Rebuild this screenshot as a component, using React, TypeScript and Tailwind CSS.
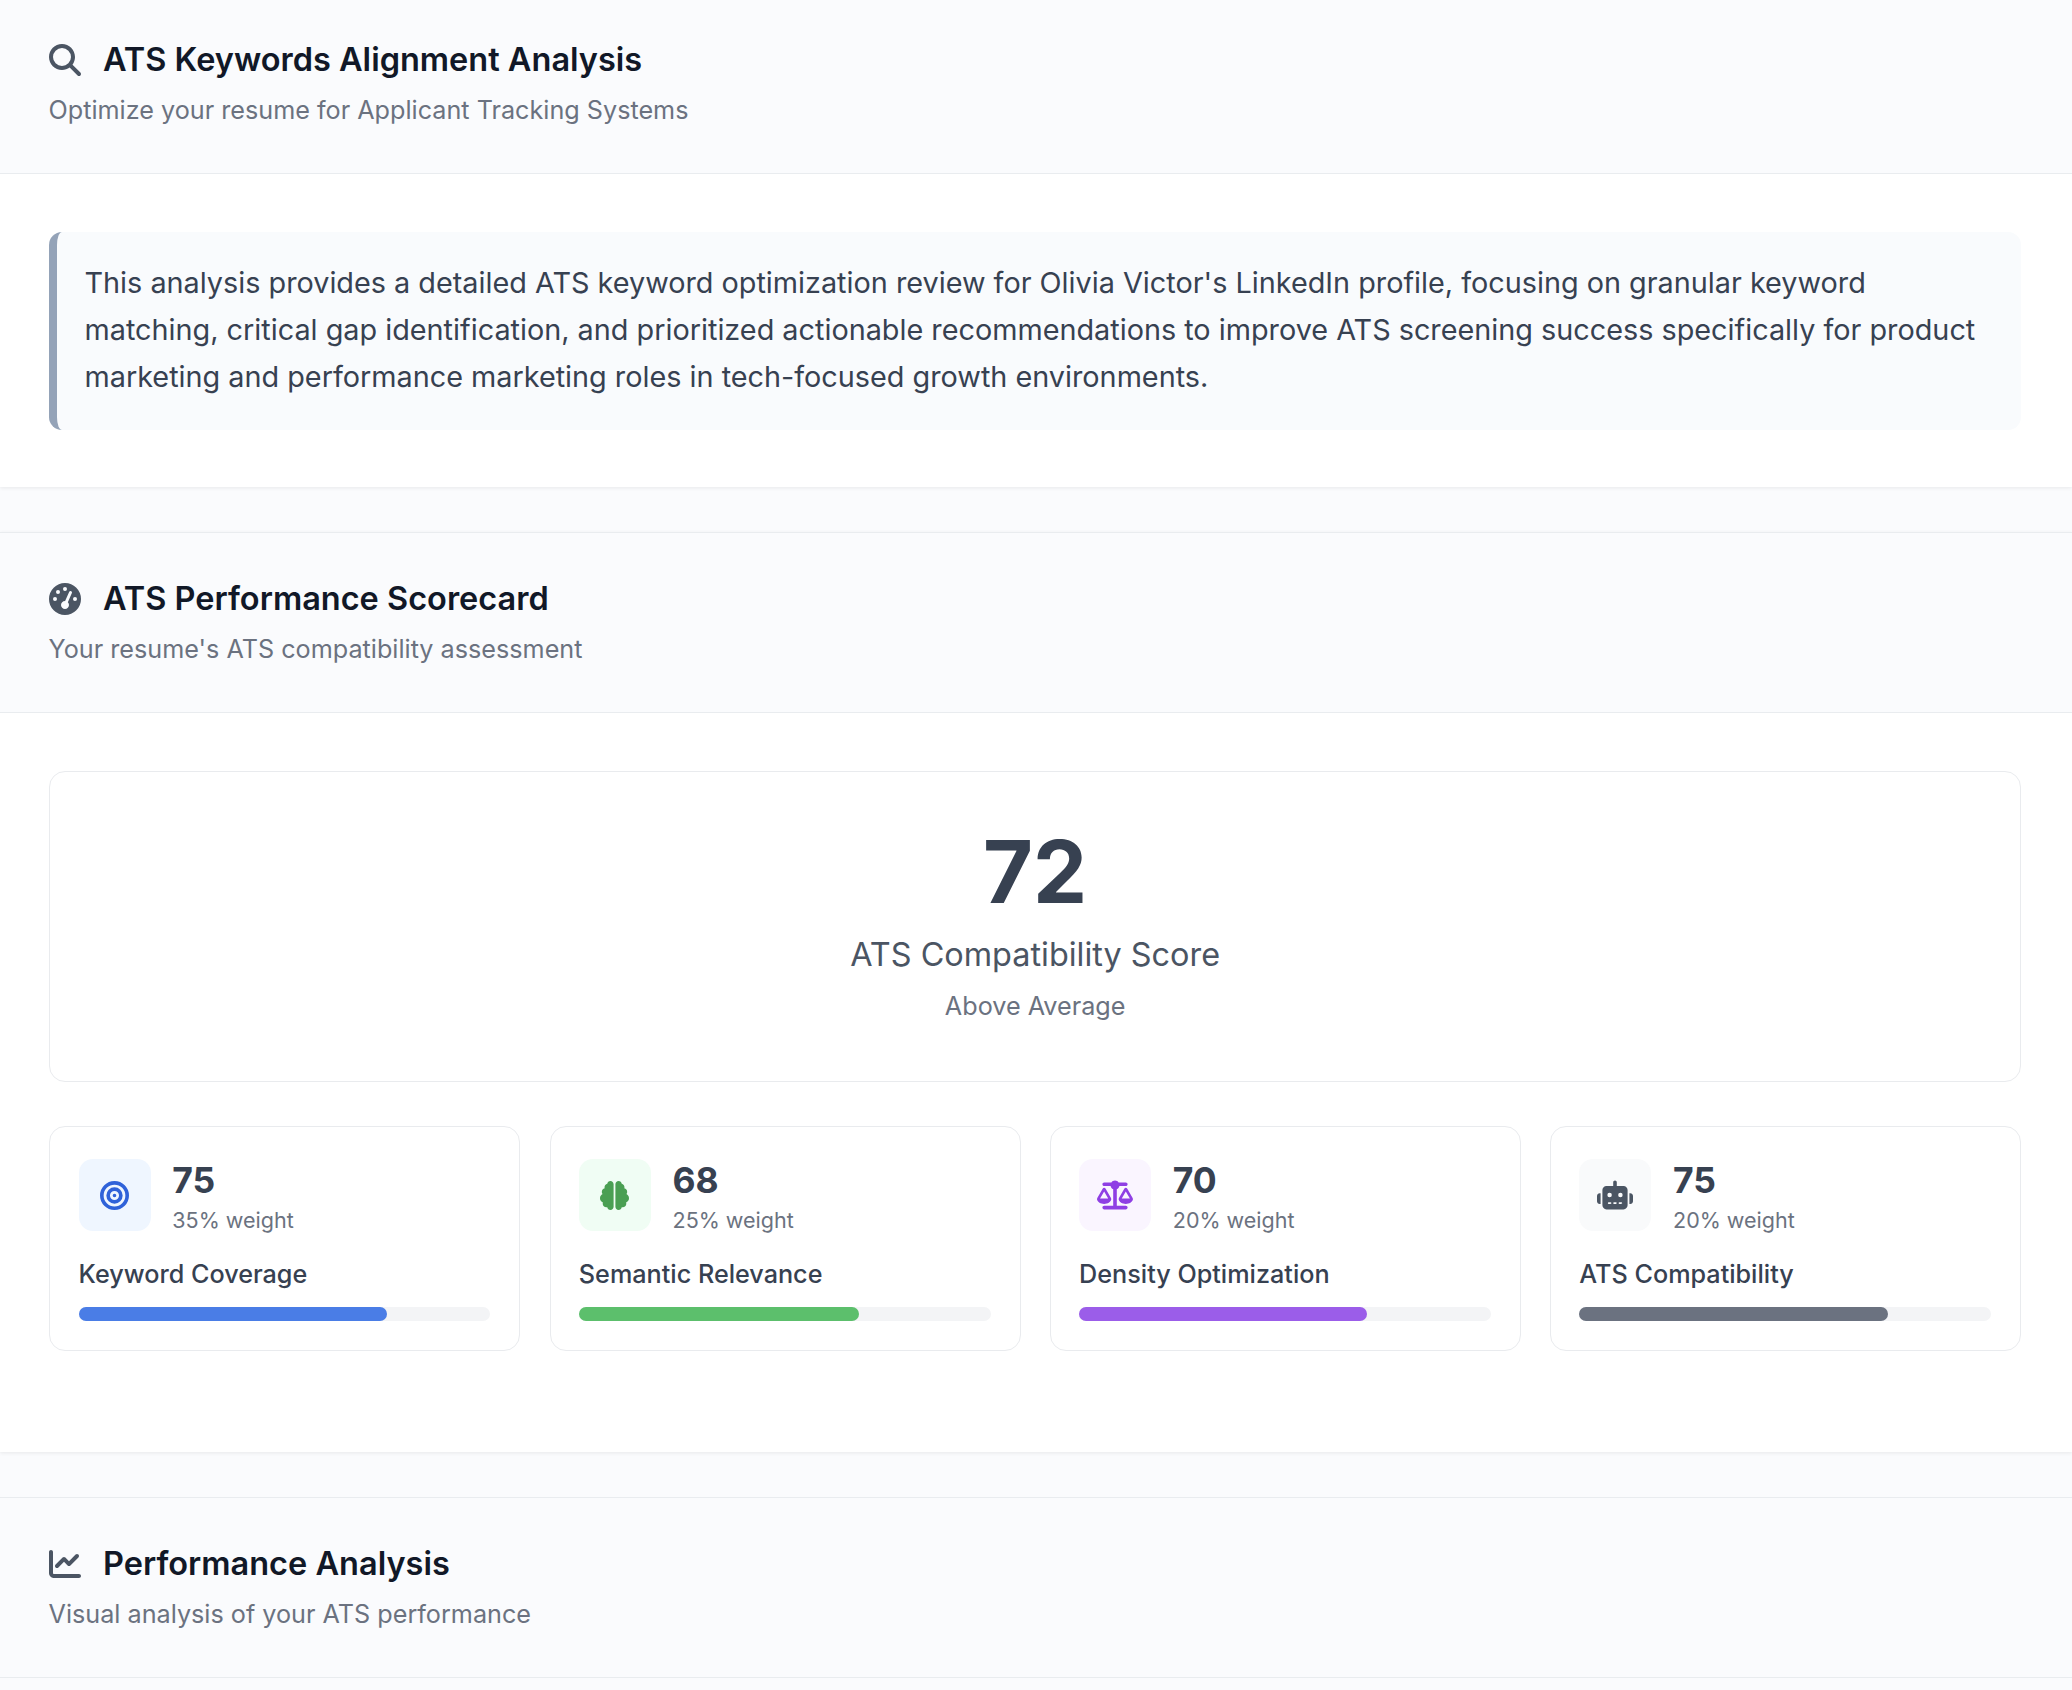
import { FaMagnifyingGlass, FaGaugeHigh, FaChartLine, FaBullseye, FaBrain, FaScaleBalanced, FaRobot } from "react-icons/fa6"

/* ─── data ───────────────────────────────────────────────────────────────── */

const METRICS = [
  { score: 75, weight: "35% weight", label: "Keyword Coverage", Icon: FaBullseye, box: "bg-[#eff6ff]", icon: "size-[29px] text-[#2f62d9]", bar: "bg-[#4a7de6]" },
  { score: 68, weight: "25% weight", label: "Semantic Relevance", Icon: FaBrain, box: "bg-[#f0fdf4]", icon: "size-[29px] text-[#4a9f53]", bar: "bg-[#5cbf6c]" },
  { score: 70, weight: "20% weight", label: "Density Optimization", Icon: FaScaleBalanced, box: "bg-[#faf5ff]", icon: "size-[36px] text-[#8f3fe4]", bar: "bg-[#9b5de9]" },
  { score: 75, weight: "20% weight", label: "ATS Compatibility", Icon: FaRobot, box: "bg-[#f9fafb]", icon: "size-[36px] text-[#4b5563]", bar: "bg-[#6b7280]" },
]

/* ─── shared header ──────────────────────────────────────────────────────── */

function SectionHeader({ icon, title, sub }: { icon: React.ReactNode; title: string; sub: string }) {
  return (
    <div className="h-[181px] border-y border-[#e9ecef] bg-[#fafbfd] pl-[48.5px] pt-[47px]">
      <div className="flex h-[38px] items-center gap-[21.5px]">
        <span className="flex w-[33px] justify-center text-[32px] text-[#4b5563]">{icon}</span>
        <h2 className="text-[32.5px] leading-[38px] font-semibold text-[#111827]">{title}</h2>
      </div>
      <p className="mt-[12px] text-[25.2px] leading-[38px] text-[#6b7280]">{sub}</p>
    </div>
  )
}

function MetricCard({ m }: { m: (typeof METRICS)[number] }) {
  return (
    <div className="h-[225px] rounded-[16px] border border-[#e9ebee] bg-white pr-[29px] pl-[28.3px] pt-[32px]">
      <div className="flex gap-[21.7px]">
        <div className={`flex size-[72px] items-center justify-center rounded-[14px] ${m.box}`}>
          <m.Icon className={m.icon} />
        </div>
        <div>
          <p className="pt-[1px] text-[35.5px] leading-[42px] font-bold text-[#374151]">{m.score}</p>
          <p className="mt-[3px] text-[21.5px] leading-[30px] text-[#6b7280]">{m.weight}</p>
        </div>
      </div>
      <p className="mt-[20px] text-[25.2px] leading-[38px] font-medium text-[#374151]">{m.label}</p>
      <div className="mt-[14px] h-[14px] rounded-full bg-[#f3f4f6]">
        <div className={`h-full rounded-full ${m.bar}`} style={{ width: `${m.score}%` }} />
      </div>
    </div>
  )
}

/* ─── page ───────────────────────────────────────────────────────────────── */

export default function App() {
  return (
    <div className="h-[1690px] overflow-hidden bg-[#fafbfd] font-['Inter',sans-serif]">
      <section className="-mt-[7px] bg-white shadow-[0_1px_4px_rgba(0,0,0,0.08)]">
        <SectionHeader icon={<FaMagnifyingGlass />} title="ATS Keywords Alignment Analysis" sub="Optimize your resume for Applicant Tracking Systems" />
        <div className="pt-[58px] pr-[51px] pb-[57px] pl-[49px]">
          <div className="rounded-[13px] border-l-[8px] border-[#94a3b8] bg-[#f9fbfd] pt-[27px] pr-[28px] pb-[30px] pl-[27.5px]">
            <p className="text-[28.8px] leading-[47px] text-[#374151]">
              This analysis provides a detailed ATS keyword optimization review for Olivia Victor's LinkedIn profile, focusing on granular keyword matching, critical gap identification, and prioritized actionable recommendations to improve ATS screening success specifically for product marketing and performance marketing roles in tech-focused growth environments.
            </p>
          </div>
        </div>
      </section>

      <section className="mt-[45px] bg-white shadow-[0_1px_4px_rgba(0,0,0,0.08)]">
        <SectionHeader icon={<FaGaugeHigh />} title="ATS Performance Scorecard" sub="Your resume's ATS compatibility assessment" />
        <div className="pt-[58px] pr-[51px] pb-[101px] pl-[49.3px]">
          <div className="flex h-[311px] flex-col items-center rounded-[16px] border border-[#e9ebee] pt-[57px]">
            <p className="text-[86px] leading-[86px] font-bold text-[#374151]">72</p>
            <p className="mt-[17px] text-[32.4px] leading-[46px] text-[#4b5563]">ATS Compatibility Score</p>
            <p className="mt-[9px] text-[25.2px] leading-[38px] text-[#6b7280]">Above Average</p>
          </div>
          <div className="mt-[44px] grid grid-cols-4 gap-[29.3px]">
            {METRICS.map((m) => (
              <MetricCard key={m.label} m={m} />
            ))}
          </div>
        </div>
      </section>

      <section className="mt-[44.5px] bg-white">
        <SectionHeader icon={<FaChartLine />} title="Performance Analysis" sub="Visual analysis of your ATS performance" />
      </section>
    </div>
  )
}
